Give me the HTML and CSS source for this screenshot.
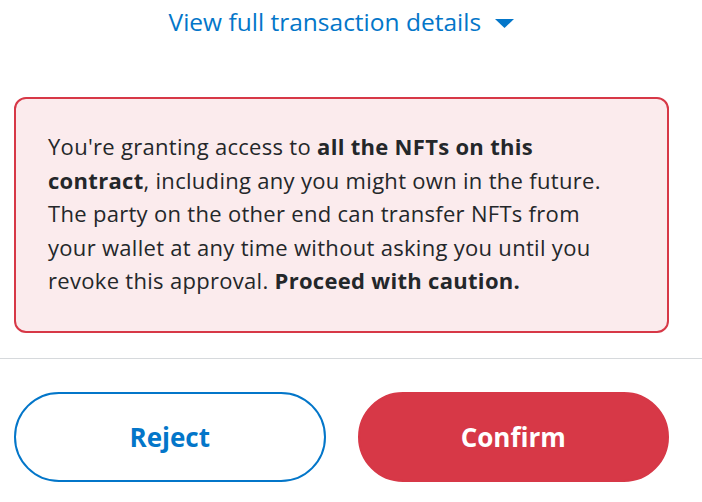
FILE: index.html
```html
<!DOCTYPE html>
<html lang="en">
<head>
    <meta charset="UTF-8">
    <meta name="viewport" content="width=device-width, initial-scale=1.0">
    <title>Confirm Approval</title>
    <link rel="stylesheet" href="styles.css">
</head>
<body>
    <div class="details">
        <a href="#" class="details-link">View full transaction details
            <svg class="caret" width="19" height="9" viewBox="0 0 19 9"><path d="M0 0 H19 L9.5 9 Z" fill="currentColor"/></svg>
        </a>
    </div>
    <div class="warning">
        <p>You're granting access to <strong>all the NFTs on this contract</strong>, including any you might own in the future. The party on the other end can transfer NFTs from your wallet at any time without asking you until you revoke this approval. <strong>Proceed with caution.</strong></p>
    </div>
    <footer class="actions">
        <button class="btn secondary">Reject</button>
        <button class="btn danger">Confirm</button>
    </footer>
</body>
</html>
```

FILE: styles.css
```css
/* Approval confirmation footer */
body {
    font-family: "Open Sans", "Noto Sans", sans-serif;
    margin: 0;
    padding: 0;
    background: #fff;
    color: #24272a;
}

.details {
    text-align: center;
    padding: 5px 33px 0 14px;
    height: 89px;
    box-sizing: border-box;
}

.details-link {
    color: #0376c9;
    text-decoration: none;
    font-size: 24.5px;
    line-height: 34px;
}

.caret {
    margin-left: 8px;
    vertical-align: 3px;
}

.warning {
    margin: 8px 33px 0 14px;
    padding: 31px 35px 33px 32px;
    background: #fbebed;
    border: 2px solid #d73847;
    border-radius: 12px;
}

.warning p {
    margin: 0;
    font-size: 22px;
    line-height: 33.5px;
    letter-spacing: 0.3px;
}

.warning strong {
    font-weight: 700;
}

.actions {
    margin-top: 25px;
    border-top: 1px solid #d6d9dc;
    padding: 33px 33px 20px 14px;
    display: flex;
    gap: 32px;
}

.btn {
    flex: 1;
    height: 90px;
    border-radius: 45px;
    font-family: inherit;
    font-size: 26px;
    font-weight: 700;
    cursor: pointer;
}

.btn.secondary {
    background: #fff;
    color: #0376c9;
    border: 2px solid #0376c9;
}

.btn.danger {
    background: #d73847;
    color: #fff;
    border: 2px solid #d73847;
}
```
